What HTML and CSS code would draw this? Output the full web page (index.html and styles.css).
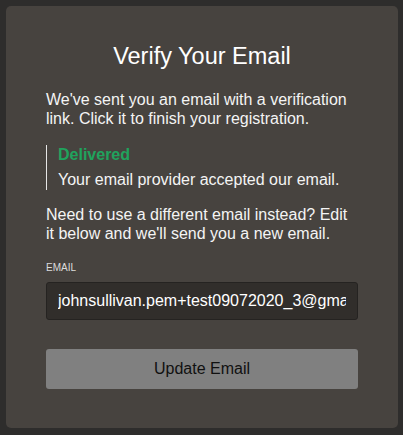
FILE: index.html
```html
<!doctype html>
<html lang="en">

<head>
    <meta charset="UTF-8" />
    <meta name="viewport" content="width=device-width, initial-scale=1.0" />
    <title>Verify Your Email</title>
    <link rel="stylesheet" href="styles.css">
</head>

<body>
    <!-- tarjeta de verificacion -->
    <div class="verify-card">
        <h1 class="verify-title">Verify Your Email</h1>
        <p class="verify-text">We've sent you an email with a verification link. Click it to finish your registration.</p>

        <div class="status-box">
            <div class="status-title">Delivered</div>
            <div class="status-text">Your email provider accepted our email.</div>
        </div>

        <p class="verify-text">Need to use a different email instead? Edit it below and we'll send you a new email.</p>

        <form id="emailForm" class="email-form">
            <label for="email" class="email-label">EMAIL</label>
            <input type="text" id="email" class="email-input" value="johnsullivan.pem+test09072020_3@gmail.com" autocomplete="off" />
            <button type="button" class="update-button">Update Email</button>
        </form>
    </div>
</body>

</html>
```

FILE: styles.css
```css
*,
*::before,
*::after {
    box-sizing: border-box;
}

body {
    margin: 0;
    padding: 6px 5px 7px 6px;
    background: #2e2d2c;
    font-family: "Liberation Sans", Arial, sans-serif;
    color: #f4f4f4;
}

.verify-card {
    background: #47433f;
    border-radius: 5px;
    padding: 36px 40px 39px 40px;
    height: 422px;
}

.verify-title {
    margin: 0 0 20px;
    font-size: 23.5px;
    line-height: 28px;
    font-weight: normal;
    text-align: center;
    color: #fff;
}

.verify-text {
    margin: 0;
    font-size: 16px;
    line-height: 19px;
}

.status-box {
    margin: 17px 0 15px;
    border-left: 1px solid #e6e6e6;
    padding-left: 11px;
}

.status-title {
    font-size: 16px;
    line-height: 20px;
    font-weight: bold;
    color: #20a35d;
}

.status-text {
    margin-top: 5px;
    font-size: 16px;
    line-height: 20px;
}

.email-form {
    display: flex;
    flex-direction: column;
    margin-top: 19px;
}

.email-label {
    font-size: 10px;
    line-height: 12px;
    color: #dcdcdc;
    margin-bottom: 8px;
}

.email-input {
    height: 38px;
    padding: 0 11px;
    background: #312e2b;
    border: 1px solid #252321;
    border-radius: 3px;
    color: #fff;
    font-family: "Liberation Sans", Arial, sans-serif;
    font-size: 16px;
}

.email-input:focus {
    outline: 0;
}

.update-button {
    margin-top: 29px;
    height: 40px;
    background: #808080;
    border: 0;
    border-radius: 3px;
    color: #111;
    font-family: "Liberation Sans", Arial, sans-serif;
    font-size: 16px;
}
```
